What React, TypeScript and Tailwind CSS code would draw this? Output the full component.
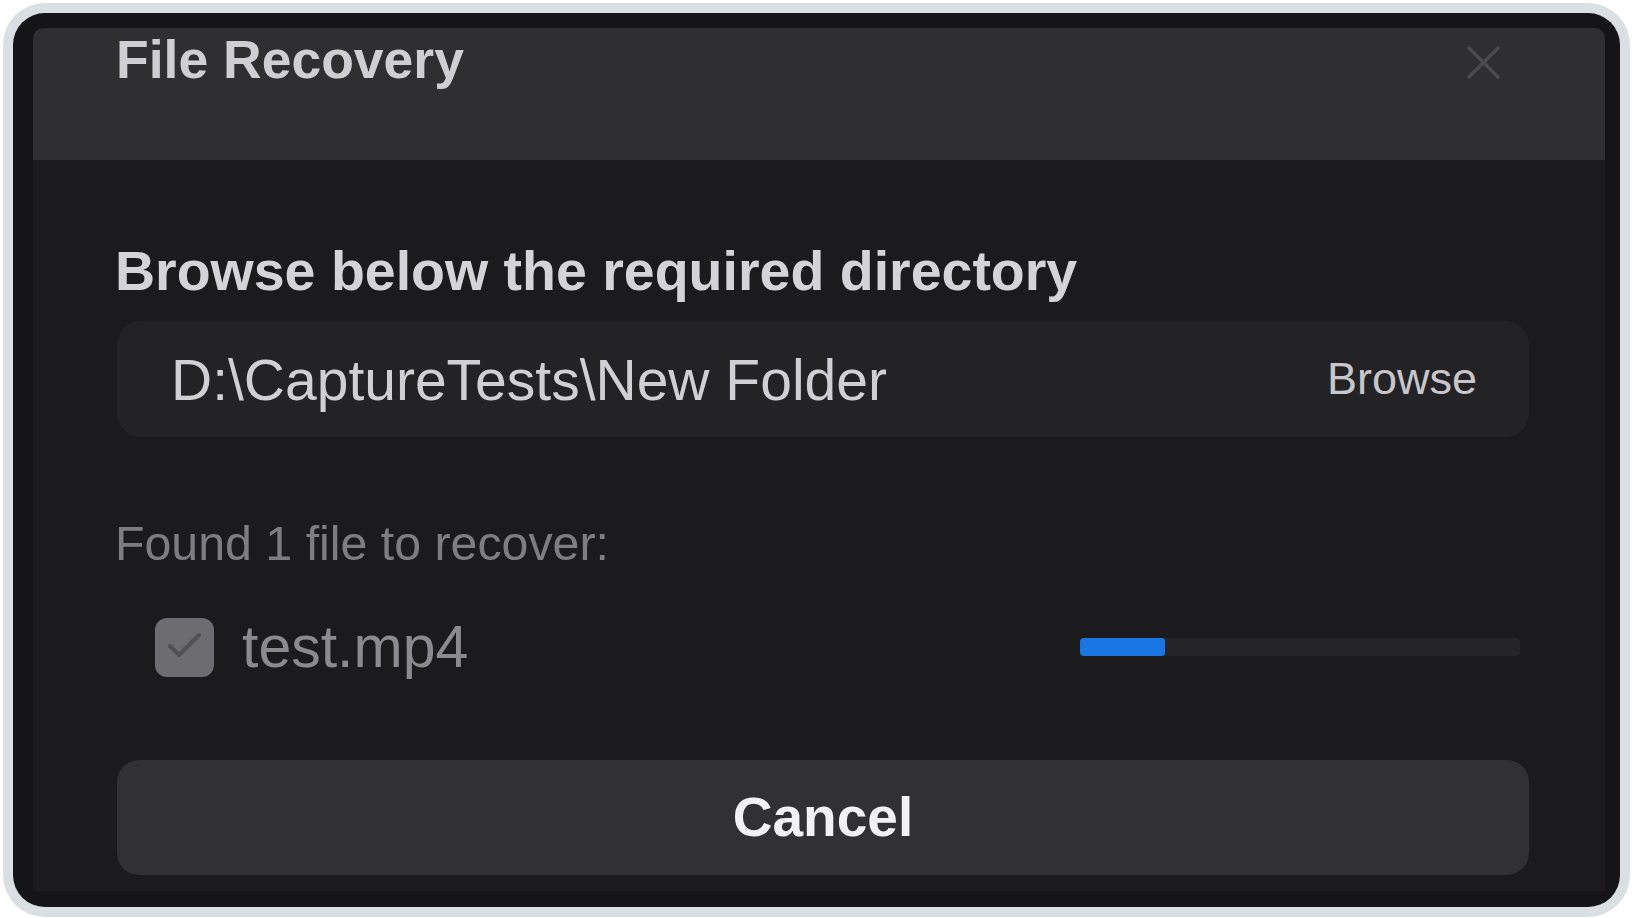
import React from 'react';

const FileRecoveryDialog: React.FC = () => {
  const progress = 85 / 440;

  return (
    <div className="w-[1607px] h-[894px] rounded-[32px] bg-[#151517] pl-[20px] pr-[15px] pt-[15px] pb-[17px] flex flex-col">
      {/* Header */}
      <div className="h-[132px] shrink-0 rounded-t-[10px] bg-[#2f2f31] flex justify-between pl-[83px] pr-[105px]">
        <h1 className="mt-[5px] text-[53.5px] leading-none font-bold text-[#cfcfd3]">File Recovery</h1>
        <button className="mt-[18px] w-[33px] h-[33px] text-[#4b4b4e]">
          <svg viewBox="0 0 33 33" className="w-[33px] h-[33px]" fill="none" stroke="currentColor" strokeWidth="3.5" strokeLinecap="round">
            <path d="M2 2 L31 31 M31 2 L2 31" />
          </svg>
        </button>
      </div>

      {/* Body */}
      <div className="flex-1 bg-[#1b1b1d] pl-[84px] pr-[76px] pt-[84px] pb-[16px] flex flex-col">
        <h2 className="-ml-[2px] text-[55.5px] leading-none font-bold text-[#d4d4d8]">Browse below the required directory</h2>

        <div className="mt-[21px] h-[116px] rounded-[24px] bg-[#232326] flex items-center justify-between pl-[54px] pr-[52px]">
          <span className="mt-[4px] text-[57px] leading-none text-[#d0d0d4]">D:\CaptureTests\New Folder</span>
          <button className="text-[45px] leading-none text-[#c7c7cb]">Browse</button>
        </div>

        <p className="-ml-[2px] mt-[82px] text-[48.3px] leading-none text-[#7d7d82]">Found 1 file to recover:</p>

        <div className="mt-[51px] h-[59px] flex items-center">
          <div className="ml-[38px] w-[59px] h-[59px] rounded-[12px] bg-[#6c6c71] flex items-center justify-center">
            <svg viewBox="0 0 59 59" className="w-[59px] h-[59px]" fill="none" stroke="#505055" strokeWidth="4" strokeLinecap="round" strokeLinejoin="round">
              <path d="M15 28 L24 37 L44 17" />
            </svg>
          </div>
          <span className="ml-[28px] text-[59px] leading-none text-[#8a8a8f]">test.mp4</span>
          <div className="ml-auto mr-[9px] w-[440px] h-[18px] rounded-[4px] bg-[#252527] overflow-hidden">
            <div className="h-full bg-[#1a76e2] rounded-[3px]" style={{ width: `${progress * 100}%` }} />
          </div>
        </div>

        <button className="mt-[83px] h-[115px] rounded-[22px] bg-[#313134] text-[55px] leading-none font-bold text-[#f2f2f4]">
          Cancel
        </button>
      </div>
    </div>
  );
};

export default function App() {
  return (
    <div className="min-h-screen w-full bg-white p-[3px]" style={{ fontFamily: '"Liberation Sans", Arial, sans-serif' }}>
      <div className="w-[1627px] h-[914px] rounded-[42px] bg-[#d9dfe2] p-[10px]">
        <FileRecoveryDialog />
      </div>
    </div>
  );
}
